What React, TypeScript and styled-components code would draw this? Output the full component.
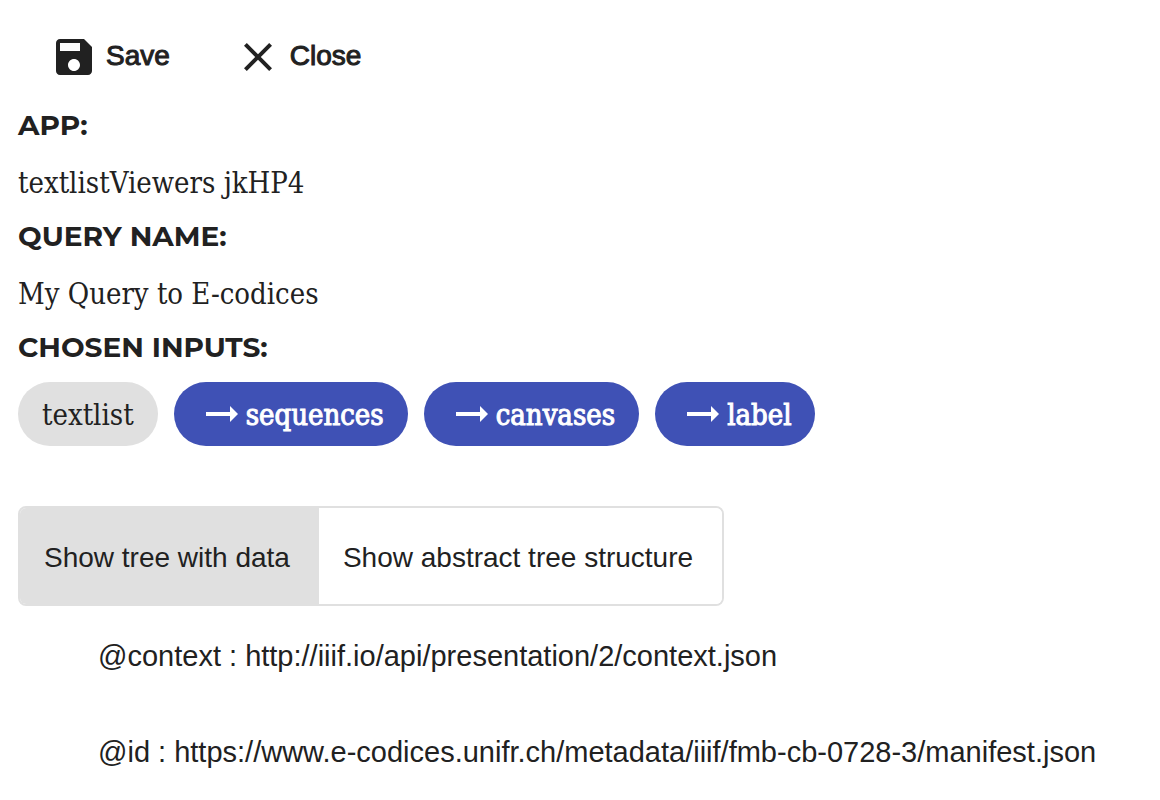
import React, { useState } from "react";
import styled, { createGlobalStyle } from "styled-components";

const slab = `"Roboto Slab", "DejaVu Serif Condensed", "DejaVu Serif", serif`;
const sans = `"Liberation Sans", Arial, sans-serif`;

const GlobalStyle = createGlobalStyle`
  *, *::before, *::after { box-sizing: border-box; }
  body {
    margin: 0;
    background: #fff;
    color: #212121;
    font-family: ${sans};
    font-size: 28px;
  }
`;

const Page = styled.main`
  padding: 25px 18px 0;
`;

const Toolbar = styled.div`
  display: flex;
  gap: 32px;
  padding-left: 20px;
`;

const ToolButton = styled.button`
  display: inline-flex;
  align-items: center;
  gap: 14px;
  height: 64px;
  padding: 0 20px 0 18px;
  border: 0;
  background: none;
  color: #212121;
  font: 400 28px/32px ${sans};
  -webkit-text-stroke: 1px #212121;
  cursor: pointer;

  svg { flex: none; }
`;

const ToolLabel = styled.span`
  padding-bottom: 2px;
`;

const Details = styled.dl`
  margin: 16px 0 0;
`;

const Label = styled.dt`
  font: 700 28px/40px "Montserrat", "Inter", sans-serif;
  text-transform: uppercase;
`;

const Value = styled.dd`
  margin: 18px 0 13px;
  font: 400 29px/40px ${slab};
`;

const Chips = styled.dd`
  display: flex;
  flex-wrap: wrap;
  gap: 16px;
  margin: 15px 0 0;
`;

const Chip = styled.span<{ $linked?: boolean }>`
  display: inline-flex;
  align-items: center;
  gap: 8px;
  height: 64px;
  padding: 0 24px 0 ${(p) => (p.$linked ? 32 : 24)}px;
  border-radius: 32px;
  background: ${(p) => (p.$linked ? "#3f51b5" : "#e0e0e0")};
  color: ${(p) => (p.$linked ? "#fff" : "#212121")};
  font: 400 29px/40px ${slab};
  -webkit-text-stroke: ${(p) => (p.$linked ? "1px #fff" : "0")};
`;

const ChipLabel = styled.span`
  padding-top: 2px;
`;

const ToggleGroup = styled.div`
  display: inline-flex;
  height: 100px;
  margin-top: 60px;
  overflow: hidden;
  border: 2px solid #e0e0e0;
  border-radius: 8px;
`;

const Toggle = styled.button<{ $active: boolean }>`
  padding: 4px 29px 0 24px;
  border: 0;
  background: ${(p) => (p.$active ? "#e0e0e0" : "#fff")};
  color: #212121;
  font: 400 28px/32px ${sans};
  cursor: pointer;
`;

const Tree = styled.ul`
  margin: 0;
  padding: 2px 0 0 80px;
  list-style: none;
`;

const Leaf = styled.li`
  display: flex;
  align-items: center;
  height: 96px;
  font-size: 29px;
  line-height: 32px;
  white-space: nowrap;
`;

const SaveIcon = () => (
  <svg width="36" height="36" viewBox="3 3 18 18" fill="currentColor" aria-hidden="true">
    <path d="M17 3H5c-1.11 0-2 .9-2 2v14c0 1.1.89 2 2 2h14c1.1 0 2-.9 2-2V7l-4-4zm-5 16c-1.66 0-3-1.34-3-3s1.34-3 3-3 3 1.34 3 3-1.34 3-3 3zm3-10H5V5h10v4z" />
  </svg>
);

const CloseIcon = () => (
  <svg width="36" height="36" viewBox="3 3 18 18" fill="currentColor" aria-hidden="true">
    <path d="M19 6.41L17.59 5 12 10.59 6.41 5 5 6.41 10.59 12 5 17.59 6.41 19 12 13.41 17.59 19 19 17.59 13.41 12z" />
  </svg>
);

const Arrow = () => (
  <svg width="32" height="16" viewBox="0 0 32 16" fill="currentColor" aria-hidden="true">
    <path d="M0 6h24V0l8 8-8 8v-6H0z" />
  </svg>
);

const inputs = ["sequences", "canvases", "label"];
const views = ["Show tree with data", "Show abstract tree structure"];
const leaves = [
  ["@context", "http://iiif.io/api/presentation/2/context.json"],
  ["@id", "https://www.e-codices.unifr.ch/metadata/iiif/fmb-cb-0728-3/manifest.json"],
];

export default function App() {
  const [view, setView] = useState(0);
  return (
    <Page>
      <GlobalStyle />
      <Toolbar>
        <ToolButton type="button"><SaveIcon /><ToolLabel>Save</ToolLabel></ToolButton>
        <ToolButton type="button"><CloseIcon /><ToolLabel>Close</ToolLabel></ToolButton>
      </Toolbar>
      <Details>
        <Label>App:</Label>
        <Value>textlistViewers jkHP4</Value>
        <Label>Query name:</Label>
        <Value>My Query to E-codices</Value>
        <Label>Chosen inputs:</Label>
        <Chips>
          <Chip><ChipLabel>textlist</ChipLabel></Chip>
          {inputs.map((name) => (
            <Chip key={name} $linked><Arrow /><ChipLabel>{name}</ChipLabel></Chip>
          ))}
        </Chips>
      </Details>
      <ToggleGroup role="group" aria-label="Tree view">
        {views.map((name, i) => (
          <Toggle key={name} type="button" $active={view === i} aria-pressed={view === i} onClick={() => setView(i)}>
            {name}
          </Toggle>
        ))}
      </ToggleGroup>
      <Tree>
        {leaves.map(([key, value]) => (
          <Leaf key={key}>{key} : {value}</Leaf>
        ))}
      </Tree>
    </Page>
  );
}
